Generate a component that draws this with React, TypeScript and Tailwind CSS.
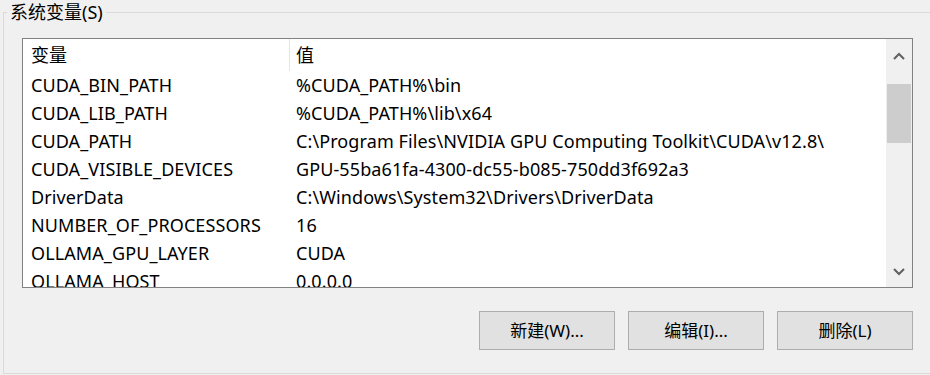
const ROWS: [string, string][] = [
  ["CUDA_BIN_PATH", "%CUDA_PATH%\\bin"],
  ["CUDA_LIB_PATH", "%CUDA_PATH%\\lib\\x64"],
  ["CUDA_PATH", "C:\\Program Files\\NVIDIA GPU Computing Toolkit\\CUDA\\v12.8\\"],
  ["CUDA_VISIBLE_DEVICES", "GPU-55ba61fa-4300-dc55-b085-750dd3f692a3"],
  ["DriverData", "C:\\Windows\\System32\\Drivers\\DriverData"],
  ["NUMBER_OF_PROCESSORS", "16"],
  ["OLLAMA_GPU_LAYER", "CUDA"],
  ["OLLAMA_HOST", "0.0.0.0"],
];

function Chevron({ up }: { up?: boolean }) {
  return (
    <svg width="12" height="8" viewBox="0 0 12 8" className="text-[#606060]">
      <path
        d={up ? "M1 7 L6 2 L11 7" : "M1 1 L6 6 L11 1"}
        fill="none"
        stroke="currentColor"
        strokeWidth="2"
      />
    </svg>
  );
}

export default function App() {
  return (
    <div className="h-[375px] w-[930px] overflow-hidden bg-[#f0f0f0] pl-[3px] pt-[12px] font-['Noto_Sans','Noto_Sans_CJK_SC',sans-serif] text-[18px] text-black">
      {/* 分组框 */}
      <div className="relative h-[362px] w-[940px] border-b border-l border-t border-[#dadada]">
        <span className="absolute -top-[14px] left-[3px] bg-[#f0f0f0] px-[3px] leading-[26px]">
          系统变量(S)
        </span>

        <div className="flex flex-col pl-[18px] pt-[25px]">
          {/* 列表 */}
          <div className="flex h-[250px] w-[891px] border border-[#828282] bg-white tracking-[0.1px]">
            <div className="flex-1 overflow-hidden">
              <div className="flex h-[32px] items-center">
                <div className="w-[266px] pl-[8px]">变量</div>
                <div className="h-full w-px bg-[#e5e5e5]" />
                <div className="pl-[6px]">值</div>
              </div>
              {ROWS.map(([k, v]) => (
                <div key={k} className="flex h-[28px] items-center whitespace-nowrap">
                  <div className="w-[267px] pl-[8px]">{k}</div>
                  <div className="pl-[6px]">{v}</div>
                </div>
              ))}
            </div>

            {/* 滚动条 */}
            <div className="flex w-[26px] flex-col bg-[#f0f0f0]">
              <div className="flex h-[34px] items-center justify-center">
                <Chevron up />
              </div>
              <div className="mx-px mt-[11px] h-[59px] bg-[#cdcdcd]" />
              <div className="flex-1" />
              <div className="flex h-[30px] items-center justify-center">
                <Chevron />
              </div>
            </div>
          </div>

          {/* 按钮 */}
          <div className="mt-[23px] flex gap-[13px] pl-[457px] text-[17px]">
            {["新建(W)...", "编辑(I)...", "删除(L)"].map((t) => (
              <button
                key={t}
                type="button"
                className="h-[39px] w-[136px] border border-[#adadad] bg-[#e1e1e1]"
              >
                {t}
              </button>
            ))}
          </div>
        </div>
      </div>
    </div>
  );
}
